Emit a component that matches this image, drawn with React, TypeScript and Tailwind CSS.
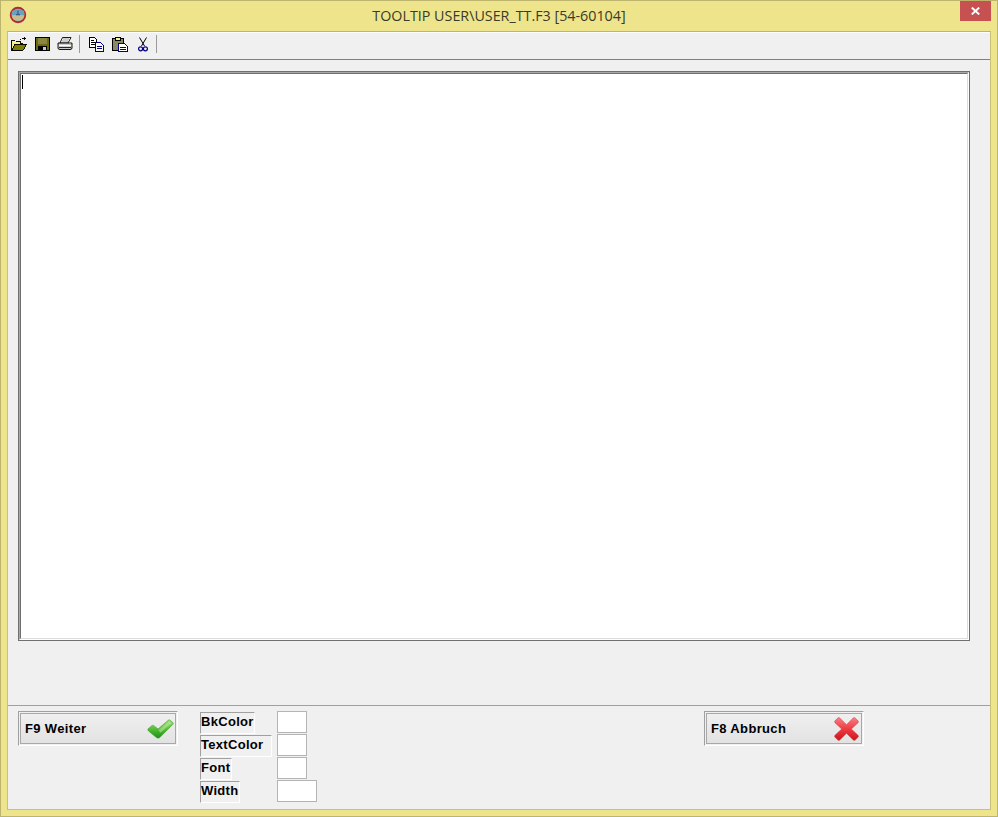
import React from 'react'

const ui = "font-['Liberation_Sans',Arial,sans-serif]"

function AppIcon() {
  return (
    <svg width="18" height="18" viewBox="0 0 18 18">
      <circle cx="9" cy="9" r="7.2" fill="#8fb8c4" stroke="#b02a35" strokeWidth="2" />
      <path d="M2.5 9.5 H15.5 L14 13 Q9 16.5 4 13 Z" fill="#c8bc8c" />
      <path d="M3 5 Q9 1.5 15 5 L15.5 9 H2.5 Z" fill="#6ea2bc" />
      <path d="M8.4 4.5 h1.2 v3.5 h1.4 v1.2 h-4 v-1.2 h1.4 Z" fill="#2f5f8f" />
    </svg>
  )
}

function FolderIcon() {
  return (
    <svg width="17" height="14" viewBox="0 0 17 14" shapeRendering="crispEdges">
      <path d="M0.5 3.5 h4 l1 1 h5 v2 h2 v1 l-3 6 H0.5 Z" fill="#f7f08c" stroke="#000" />
      <path d="M1 13.5 L4 7.5 H16.5 L13 13.5 Z" fill="#808000" stroke="#000" />
      <path d="M9 3 L10 2 H11 L12 1 H14 M14 0 V3 M13 1 H16 M15 1 V2" fill="none" stroke="#000" />
    </svg>
  )
}

function SaveIcon() {
  return (
    <svg width="15" height="14" viewBox="0 0 15 14" shapeRendering="crispEdges">
      <rect x="0" y="0" width="15" height="14" fill="#000" />
      <rect x="1" y="1" width="13" height="12" fill="#6c6a10" />
      <rect x="3" y="1" width="9" height="6" fill="#8a8840" />
      <rect x="3" y="9" width="9" height="5" fill="#000" />
      <rect x="8" y="10" width="3" height="3" fill="#c8c8c8" />
    </svg>
  )
}

function PrintIcon() {
  return (
    <svg width="16" height="14" viewBox="0 0 16 14">
      <path d="M5.5 0.5 H14 L11 6 H3 Z" fill="#fff" stroke="#000" strokeWidth="0.9" />
      <path d="M6 2 H12 M5 4 H11" stroke="#808080" strokeWidth="0.8" />
      <path d="M1 6 H15 V11 Q15 12.5 13 12.5 H3 Q1 12.5 1 11 Z" fill="#c8c8c8" stroke="#000" strokeWidth="0.9" />
      <path d="M2 8.5 H14" stroke="#fff" strokeWidth="1.2" />
      <path d="M2 10.5 H14" stroke="#000" strokeWidth="0.8" />
      <path d="M12 7 h2" stroke="#c8b83a" strokeWidth="1" />
    </svg>
  )
}

function CopyIcon() {
  return (
    <svg width="16" height="15" viewBox="0 0 16 15" shapeRendering="crispEdges">
      <path d="M0.5 0.5 H5.5 L7.5 2.5 V10.5 H0.5 Z" fill="#fff" stroke="#000" />
      <path d="M2 3.5 H5 M2 5.5 H6 M2 7.5 H6" stroke="#000" />
      <path d="M6.5 5.5 H11.5 L14.5 8.5 V14.5 H6.5 Z" fill="#fff" stroke="#000080" />
      <path d="M8 9.5 H13 M8 11.5 H13" stroke="#000080" />
    </svg>
  )
}

function PasteIcon() {
  return (
    <svg width="16" height="15" viewBox="0 0 16 15" shapeRendering="crispEdges">
      <rect x="0.5" y="1.5" width="11" height="12" fill="#8a8a60" stroke="#000" />
      <rect x="3.5" y="0.5" width="5" height="3" fill="#f5ef96" stroke="#000" />
      <path d="M6.5 6.5 H12.5 L15.5 9.5 V14.5 H6.5 Z" fill="#fff" stroke="#000080" />
      <path d="M8 10.5 H14 M8 12.5 H14" stroke="#000080" />
    </svg>
  )
}

function CutIcon() {
  return (
    <svg width="10" height="15" viewBox="0 0 10 15">
      <path d="M1.5 0.5 L6.5 9 M8.5 0.5 L3.5 9" fill="none" stroke="#000" strokeWidth="1" />
      <circle cx="2.6" cy="11.8" r="2" fill="none" stroke="#000080" strokeWidth="1.2" />
      <circle cx="7.4" cy="11.8" r="2" fill="none" stroke="#000080" strokeWidth="1.2" />
    </svg>
  )
}

function CheckIcon() {
  return (
    <svg width="27" height="22" viewBox="0 0 28 22" className="mr-px">
      <defs>
        <linearGradient id="chk" x1="0" y1="0" x2="0" y2="1">
          <stop offset="0" stopColor="#a4e07c" />
          <stop offset="0.55" stopColor="#4cba2e" />
          <stop offset="1" stopColor="#1f8f1c" />
        </linearGradient>
      </defs>
      <path d="M1 11 L5 7.5 Q6 7 7 7.5 L11.5 11 L22 2 Q23 1 24 2 L27 4.5 Q27.5 5.5 27 6 L13 20 Q11.5 21 10 20 L1.5 13 Q0.5 12 1 11 Z" fill="url(#chk)" stroke="#3f9a35" strokeWidth="0.6" />
      <path d="M12 12 L23 3 L25.5 5 L14 15 Z" fill="#bdeba4" opacity="0.55" />
    </svg>
  )
}

function CrossIcon() {
  return (
    <svg width="25" height="24" viewBox="0 0 26 25" className="mr-[2px]">
      <defs>
        <linearGradient id="crs" x1="0" y1="0" x2="0" y2="1">
          <stop offset="0" stopColor="#fb7f85" />
          <stop offset="0.5" stopColor="#ef3a40" />
          <stop offset="1" stopColor="#c8161c" />
        </linearGradient>
      </defs>
      <path d="M1 4 L4 1 Q5 0 6 1 L13 8 L20 1 Q21 0 22 1 L25 4 Q26 5 25 6 L18 12.5 L25 19 Q26 20 25 21 L22 24 Q21 25 20 24 L13 17 L6 24 Q5 25 4 24 L1 21 Q0 20 1 19 L8 12.5 L1 6 Q0 5 1 4 Z" fill="url(#crs)" stroke="#c9323a" strokeWidth="0.5" />
    </svg>
  )
}

function ActionButton({ label, icon, className }: { label: string; icon: React.ReactNode; className?: string }) {
  return (
    <button className={`h-[35px] w-[160px] p-px border border-t-[#a0a0a0] border-l-[#a0a0a0] border-r-white border-b-white ${className ?? ''}`}>
      <div className="h-full w-full border border-[#a8a8a8] bg-gradient-to-b from-[#f0f0f0] to-[#e2e2e2] flex items-center justify-between pl-[4px] text-[13px] font-bold tracking-[0.35px] text-black">
        <span>{label}</span>
        {icon}
      </div>
    </button>
  )
}

function FieldLabel({ text, width }: { text: string; width: string }) {
  return (
    <div className={`h-[22px] ${width} border border-t-[#a0a0a0] border-l-[#a0a0a0] border-r-white border-b-white text-[13px] font-bold tracking-[0.3px] leading-[18px] text-black`}>
      {text}
    </div>
  )
}

function FieldBox({ width }: { width: string }) {
  return <div className={`h-[22px] ${width} bg-white border border-[#b4b4b4]`} />
}

export default function App() {
  return (
    <div className={`${ui} h-[817px] w-[998px] flex flex-col overflow-hidden bg-[#ede48b] border border-[#bdb46e]`}>
      <div className="h-[30px] shrink-0 grid grid-cols-[1fr_auto_1fr]">
        <div className="pl-[8px] pt-[5px]">
          <AppIcon />
        </div>
        <div className="font-['Open_Sans',sans-serif] text-[14.3px] leading-[30px] text-[#3a3a28]">TOOLTIP USER\USER_TT.F3 [54-60104]</div>
        <div className="flex justify-end pr-[6px]">
          <div className="h-[20px] w-[31px] bg-[#c75050] flex items-center justify-center">
            <svg width="9" height="8" viewBox="0 0 9 8">
              <path d="M0.8 0.6 L8.2 7.4 M8.2 0.6 L0.8 7.4" stroke="#fff" strokeWidth="2" />
            </svg>
          </div>
        </div>
      </div>

      <div className="flex-1 mx-[6px] mb-[6px] flex flex-col bg-[#f0f0f0] border border-[#c9c07a] border-t-[#bdb46e]">
        <div className="h-[28px] shrink-0 flex items-center gap-[7px] pl-[3px] pb-[4px] border-b border-b-[#808080] border-t border-t-white">
          <div className="w-[16px] flex justify-center"><FolderIcon /></div>
          <div className="w-[16px] flex justify-center"><SaveIcon /></div>
          <div className="w-[16px] flex justify-center"><PrintIcon /></div>
          <div className="h-[18px] w-px bg-[#9a9a9a] ml-[-1px] mr-[2px]" />
          <div className="w-[16px] flex justify-center"><CopyIcon /></div>
          <div className="w-[16px] flex justify-center"><PasteIcon /></div>
          <div className="w-[16px] flex justify-center"><CutIcon /></div>
          <div className="h-[18px] w-px bg-[#9a9a9a] ml-[-2px]" />
        </div>

        <div className="flex-1 pt-[11px] pl-[10px] pr-[20px] pb-[64px] flex">
          <div className="flex-1 border border-[#707070]">
            <div className="h-full border border-t-[#a8a8a8] border-l-[#a8a8a8] border-r-white border-b-white">
              <div className="h-full border border-t-[#707070] border-l-[#707070] border-r-[#dcdcdc] border-b-[#dcdcdc] bg-white pl-px pt-px">
                <div className="h-[14px] w-px bg-black" />
              </div>
            </div>
          </div>
        </div>

        <div className="h-[104px] shrink-0 border-t border-t-[#a0a0a0] pt-[5px] pl-[10px] flex items-start text-black">
          <ActionButton label="F9 Weiter" icon={<CheckIcon />} />
          <div className="ml-[22px] w-[77px] flex flex-col gap-px pt-px">
            <FieldLabel text="BkColor" width="w-[55px]" />
            <FieldLabel text="TextColor" width="w-[72px]" />
            <FieldLabel text="Font" width="w-[32px]" />
            <FieldLabel text="Width" width="w-[40px]" />
          </div>
          <div className="w-[40px] flex flex-col gap-px">
            <FieldBox width="w-[30px]" />
            <FieldBox width="w-[30px]" />
            <FieldBox width="w-[30px]" />
            <FieldBox width="w-[40px]" />
          </div>
          <ActionButton label="F8 Abbruch" icon={<CrossIcon />} className="ml-[387px]" />
        </div>
      </div>
    </div>
  )
}
